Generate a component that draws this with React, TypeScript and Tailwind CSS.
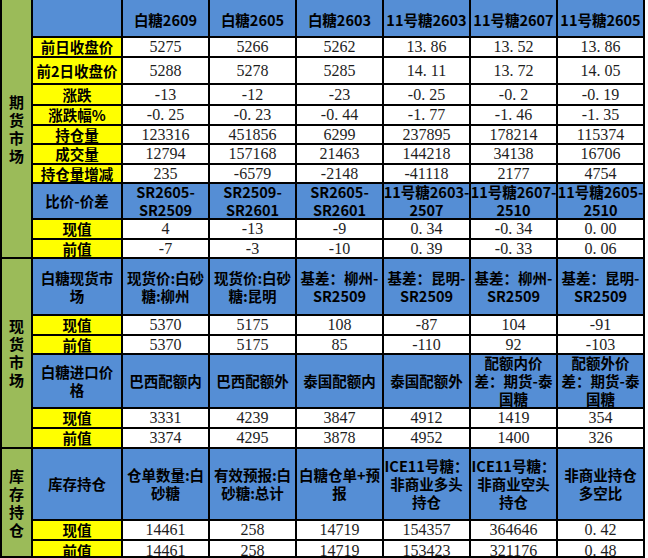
import React from "react";

const CJK = "font-['Noto_Sans_CJK_SC','Noto_Sans_CJK_JP',sans-serif]";

type CellProps = { children?: React.ReactNode; clip?: boolean; extra?: string };

function Blue({ children, extra = "" }: CellProps) {
  return (
    <div
      className={`bg-[#558ed5] flex items-center justify-center text-center font-bold text-[14.5px] leading-[18px] text-black overflow-hidden whitespace-nowrap ${CJK} ${extra}`}
    >
      <div>{children}</div>
    </div>
  );
}

function Yellow({ children, clip }: CellProps) {
  return (
    <div
      className={`bg-[#ffff00] flex justify-center overflow-hidden whitespace-nowrap font-bold text-[14.5px] text-black ${CJK} ${
        clip ? "items-start" : "items-center"
      }`}
    >
      <div className={clip ? "h-[18px] leading-[18px] pt-[1px]" : "leading-[18px]"}>{children}</div>
    </div>
  );
}

function Num({ v }: { v: string }) {
  const i = v.indexOf(".");
  if (i < 0) return <>{v}</>;
  return (
    <>
      {v.slice(0, i)}
      <span className="mr-[4px]">.</span>
      {v.slice(i + 1)}
    </>
  );
}

function Val({ v, clip }: { v: string; clip?: boolean }) {
  return (
    <div
      className={`bg-white flex justify-center overflow-hidden whitespace-nowrap text-[16px] text-[#1e1e1e] font-['Liberation_Serif',serif] ${
        clip ? "items-start" : "items-center"
      }`}
    >
      <div className={clip ? "h-[18px] leading-[18px] pt-[1px]" : "leading-[18px]"}>
        <Num v={v} />
      </div>
    </div>
  );
}

function Green({ text, span }: { text: string; span: string }) {
  return (
    <div
      className={`bg-[#9bbb59] col-start-1 ${span} flex flex-col items-center justify-center font-bold text-[15px] leading-[18px] text-black ${CJK}`}
    >
      {text.split("").map((c, i) => (
        <div key={i}>{c}</div>
      ))}
    </div>
  );
}

function Lines({ lines }: { lines: string[] }) {
  return (
    <>
      {lines.map((l, i) => (
        <div key={i}>{l}</div>
      ))}
    </>
  );
}

const headers = ["白糖2609", "白糖2605", "白糖2603", "11号糖2603", "11号糖2607", "11号糖2605"];

const futRows: [string, string[]][] = [
  ["前日收盘价", ["5275", "5266", "5262", "13.86", "13.52", "13.86"]],
  ["前2日收盘价", ["5288", "5278", "5285", "14.11", "13.72", "14.05"]],
  ["涨跌", ["-13", "-12", "-23", "-0.25", "-0.2", "-0.19"]],
  ["涨跌幅%", ["-0.25", "-0.23", "-0.44", "-1.77", "-1.46", "-1.35"]],
  ["持仓量", ["123316", "451856", "6299", "237895", "178214", "115374"]],
  ["成交量", ["12794", "157168", "21463", "144218", "34138", "16706"]],
  ["持仓量增减", ["235", "-6579", "-2148", "-41118", "2177", "4754"]],
];

type Section = {
  label: string[];
  heads: string[][];
  cur: string[];
  prev: string[];
};

const spread: Section = {
  label: ["比价-价差"],
  heads: [
    ["SR2605-", "SR2509"],
    ["SR2509-", "SR2601"],
    ["SR2605-", "SR2601"],
    ["11号糖2603-", "2507"],
    ["11号糖2607-", "2510"],
    ["11号糖2605-", "2510"],
  ],
  cur: ["4", "-13", "-9", "0.34", "-0.34", "0.00"],
  prev: ["-7", "-3", "-10", "0.39", "-0.33", "0.06"],
};

const spot: Section = {
  label: ["白糖现货市", "场"],
  heads: [
    ["现货价:白砂", "糖:柳州"],
    ["现货价:白砂", "糖:昆明"],
    ["基差：柳州-", "SR2509"],
    ["基差：昆明-", "SR2509"],
    ["基差：柳州-", "SR2509"],
    ["基差：昆明-", "SR2509"],
  ],
  cur: ["5370", "5175", "108", "-87", "104", "-91"],
  prev: ["5370", "5175", "85", "-110", "92", "-103"],
};

const imp: Section = {
  label: ["白糖进口价", "格"],
  heads: [
    ["巴西配额内"],
    ["巴西配额外"],
    ["泰国配额内"],
    ["泰国配额外"],
    ["配额内价", "差：期货-泰", "国糖"],
    ["配额外价", "差：期货-泰", "国糖"],
  ],
  cur: ["3331", "4239", "3847", "4912", "1419", "354"],
  prev: ["3374", "4295", "3878", "4952", "1400", "326"],
};

const stock: Section = {
  label: ["库存持仓"],
  heads: [
    ["仓单数量:白", "砂糖"],
    ["有效预报:白", "砂糖:总计"],
    ["白糖仓单+预", "报"],
    ["ICE11号糖：", "非商业多头", "持仓"],
    ["ICE11号糖：", "非商业空头", "持仓"],
    ["非商业持仓", "多空比"],
  ],
  cur: ["14461", "258", "14719", "154357", "364646", "0.42"],
  prev: ["14461", "258", "14719", "153423", "321176", "0.48"],
};

function SectionRows({ s, last }: { s: Section; last?: boolean }) {
  return (
    <>
      <Blue>
        <Lines lines={s.label} />
      </Blue>
      {s.heads.map((h, i) => (
        <Blue key={"h" + i}>
          <Lines lines={h} />
        </Blue>
      ))}
      <Yellow>现值</Yellow>
      {s.cur.map((v, i) => (
        <Val key={"c" + i} v={v} />
      ))}
      <Yellow clip={last}>前值</Yellow>
      {s.prev.map((v, i) => (
        <Val key={"p" + i} v={v} clip={last} />
      ))}
    </>
  );
}

export default function App() {
  return (
    <div className="w-[648px] h-[558px] bg-white overflow-hidden">
      <div className="inline-grid grid-cols-[29px_88px_repeat(6,85px)] grid-rows-[36px_18px_25px_19px_18px_17px_18px_17px_34px_18px_17px_55px_18px_17px_52px_18px_18px_70px_18px_15px] gap-[2px] bg-black border-l-2 border-r-2 border-b-2 border-black">
        <Green text="期货市场" span="row-span-11" />
        <Blue />
        {headers.map((h) => (
          <Blue key={h} extra="pt-[4px]">
            {h}
          </Blue>
        ))}
        {futRows.map(([label, vals]) => (
          <React.Fragment key={label}>
            <Yellow>{label}</Yellow>
            {vals.map((v, i) => (
              <Val key={i} v={v} />
            ))}
          </React.Fragment>
        ))}
        <SectionRows s={spread} />
        <Green text="现货市场" span="row-span-6" />
        <SectionRows s={spot} />
        <SectionRows s={imp} />
        <Green text="库存持仓" span="row-span-3" />
        <SectionRows s={stock} last />
      </div>
    </div>
  );
}
